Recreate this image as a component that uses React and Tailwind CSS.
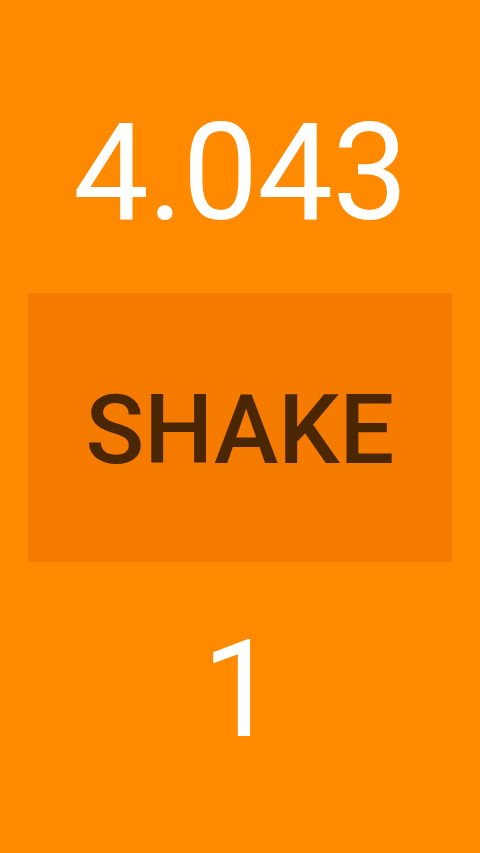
export default function App() {
  return (
    <div
      className="w-[480px] h-[853px] bg-[#FF8A00] flex flex-col items-center overflow-hidden"
      style={{ fontFamily: "Roboto, 'Noto Sans', sans-serif" }}
    >
      <div className="pt-[106px] text-[135px] leading-[135px] text-white font-normal tracking-[-1px]">
        4.043
      </div>
      <div className="mt-[52px] w-[424px] h-[269px] bg-[#F47B00] flex items-center justify-center">
        <span className="text-[97px] leading-none font-medium text-[#4A2602] mt-[6px]">
          SHAKE
        </span>
      </div>
      <div className="mt-[61px] text-[135px] leading-[135px] text-white font-normal">
        1
      </div>
    </div>
  );
}
